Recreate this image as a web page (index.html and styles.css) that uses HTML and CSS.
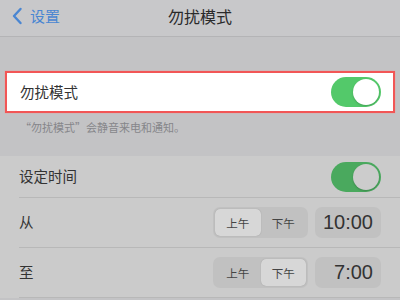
FILE: index.html
```html
<!DOCTYPE html>
<html lang="zh-CN">
<head>
<meta charset="utf-8">
<link rel="stylesheet" href="styles.css">
</head>
<body>
<div class="screen">
  <header class="nav">
    <div class="back">
      <svg class="chev" width="12" height="18" viewBox="0 0 12 18"><path d="M9.5 2 L3 9 L9.5 16" fill="none" stroke="#4a86d2" stroke-width="2.4" stroke-linecap="round" stroke-linejoin="round"/></svg>
      <span>设置</span>
    </div>
    <div class="title">勿扰模式</div>
  </header>
  <div class="gap"></div>
  <div class="hl-row">
    <span class="label">勿扰模式</span>
    <span class="toggle on"><span class="knob"></span></span>
  </div>
  <div class="note">“勿扰模式”会静音来电和通知。</div>
  <div class="group">
    <div class="cell">
      <span class="label">设定时间</span>
      <span class="toggle dim"><span class="knob"></span></span>
    </div>
    <div class="cell tall">
      <span class="label">从</span>
      <div class="controls">
        <div class="seg"><span class="sel">上午</span><span>下午</span></div>
        <div class="time">10:00</div>
      </div>
    </div>
    <div class="cell tall">
      <span class="label">至</span>
      <div class="controls">
        <div class="seg"><span>上午</span><span class="sel">下午</span></div>
        <div class="time">7:00</div>
      </div>
    </div>
  </div>
</div>
</body>
</html>
```
FILE: styles.css
```css
* { box-sizing: border-box; }
html, body { margin: 0; padding: 0; }
body {
  width: 400px;
  height: 300px;
  overflow: hidden;
  background: #c3c3c5;
  font-family: "Noto Sans CJK SC", "Noto Sans", sans-serif;
  color: #333;
}
.screen { width: 400px; height: 300px; overflow: hidden; }
.nav {
  height: 37px;
  background: #c8c8ca;
  border-bottom: 1px solid #b4b4b6;
  display: flex;
  align-items: center;
  position: relative;
}
.back {
  display: flex;
  align-items: center;
  padding-left: 11px;
  gap: 7px;
  color: #4a86d2;
  font-size: 15px;
  line-height: 1;
  margin-top: -5px;
}
.title {
  position: absolute;
  left: 0; right: 0;
  top: 8px;
  text-align: center;
  font-size: 16px;
  line-height: 1;
  color: #2a2a2a;
}
.gap { height: 34px; }
.hl-row {
  margin: 0 5px;
  height: 42px;
  background: #fff;
  border: 2px solid #f25656;
  box-shadow: 0 0 1px #f88;
  display: flex;
  align-items: center;
  justify-content: space-between;
  padding: 0 12px 0 13px;
}
.label { font-size: 14.5px; line-height: 1; color: #333; }
.toggle {
  width: 50px; height: 30px;
  border-radius: 15px;
  background: #53c96a;
  position: relative;
  display: block;
}
.toggle .knob {
  position: absolute;
  right: 2px; top: 2px;
  width: 26px; height: 26px;
  border-radius: 50%;
  background: #fff;
  box-shadow: 0 1px 2px rgba(0,0,0,0.2);
}
.toggle.dim { background: #4aa95e; }
.toggle.dim .knob { background: #cccccc; }
.note {
  height: 43px;
  padding: 8px 0 0 20px;
  font-size: 11px;
  color: #86868a;
  line-height: 1.2;
}
.group { background: #cbcbcb; }
.cell {
  height: 42px;
  margin-left: 19px;
  padding-right: 19px;
  border-bottom: 1px solid #b8b8b8;
  display: flex;
  align-items: center;
  justify-content: space-between;
}
.cell .label { color: #333; }
.cell.tall { height: 50px; }
.controls { display: flex; gap: 7px; align-items: center; }
.seg {
  width: 95px; height: 31px;
  background: #c1c1c1;
  border-radius: 7px;
  display: flex;
  padding: 2px;
}
.seg span {
  flex: 1;
  display: flex;
  align-items: center;
  justify-content: center;
  font-size: 11.5px;
  color: #444;
  border-radius: 5px;
}
.seg span.sel {
  background: #d7d7d7;
  box-shadow: 0 0 1px rgba(0,0,0,0.25);
}
.time {
  width: 66px; height: 31px;
  background: #c1c1c1;
  border-radius: 7px;
  font-family: "Liberation Sans", "Noto Sans", sans-serif;
  font-size: 20px;
  color: #333;
  display: flex;
  align-items: center;
  justify-content: flex-end;
  padding-right: 8px;
}
```
